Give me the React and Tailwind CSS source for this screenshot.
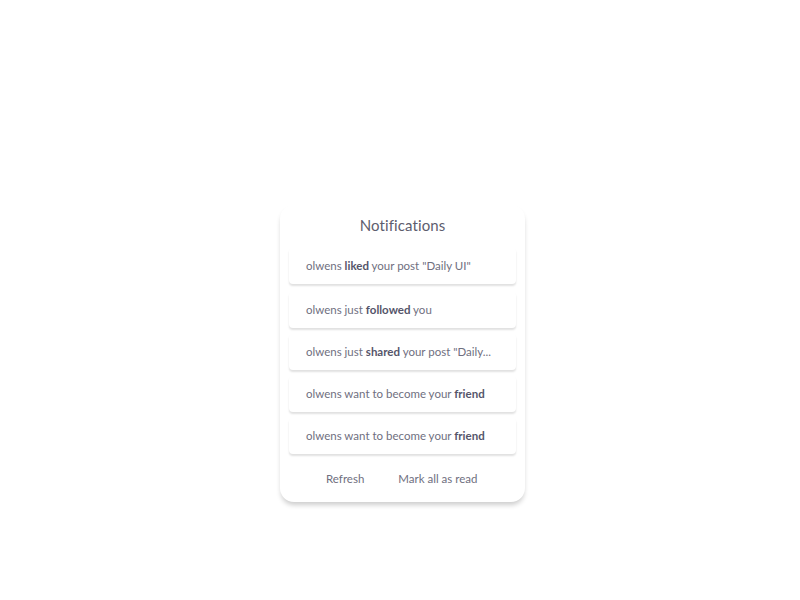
export default function App() {
  const items = [
    <>olwens <b className="font-bold text-[#55556a]">liked</b> your post "Daily UI"</>,
    <>olwens just <b className="font-bold text-[#55556a]">followed</b> you</>,
    <>olwens just <b className="font-bold text-[#55556a]">shared</b> your post "Daily...</>,
    <>olwens want to become your <b className="font-bold text-[#55556a]">friend</b></>,
    <>olwens want to become your <b className="font-bold text-[#55556a]">friend</b></>,
  ]

  return (
    <div className="w-[800px] h-[600px] bg-white font-['Lato',sans-serif]">
      <div className="pt-[205px] pl-[280px]">
        <div className="w-[245px] h-[297px] bg-white rounded-[14px] shadow-[0_4px_5px_-1px_rgba(0,0,0,0.2)] px-[9px] pt-[10px]">
          <h1 className="text-center text-[15px] leading-[20px] text-[#5d5d6e] tracking-[0.1px]">Notifications</h1>
          <div className="mt-[13px] flex flex-col gap-[6px]">
            {items.map((it, i) => (
              <div key={i} className={`h-[36px] flex items-center pl-[17px] rounded-[4px] bg-white shadow-[0_2px_2px_rgba(0,0,0,0.12)] text-[11.5px] text-[#6f6f80] ${i === 0 ? 'mb-[2px]' : ''}`}>
                <span>{it}</span>
              </div>
            ))}
          </div>
          <div className="mt-[16px] flex text-[11.5px] text-[#6f6f80]">
            <span className="ml-[37px]">Refresh</span>
            <span className="ml-[34px]">Mark all as read</span>
          </div>
        </div>
      </div>
    </div>
  )
}
